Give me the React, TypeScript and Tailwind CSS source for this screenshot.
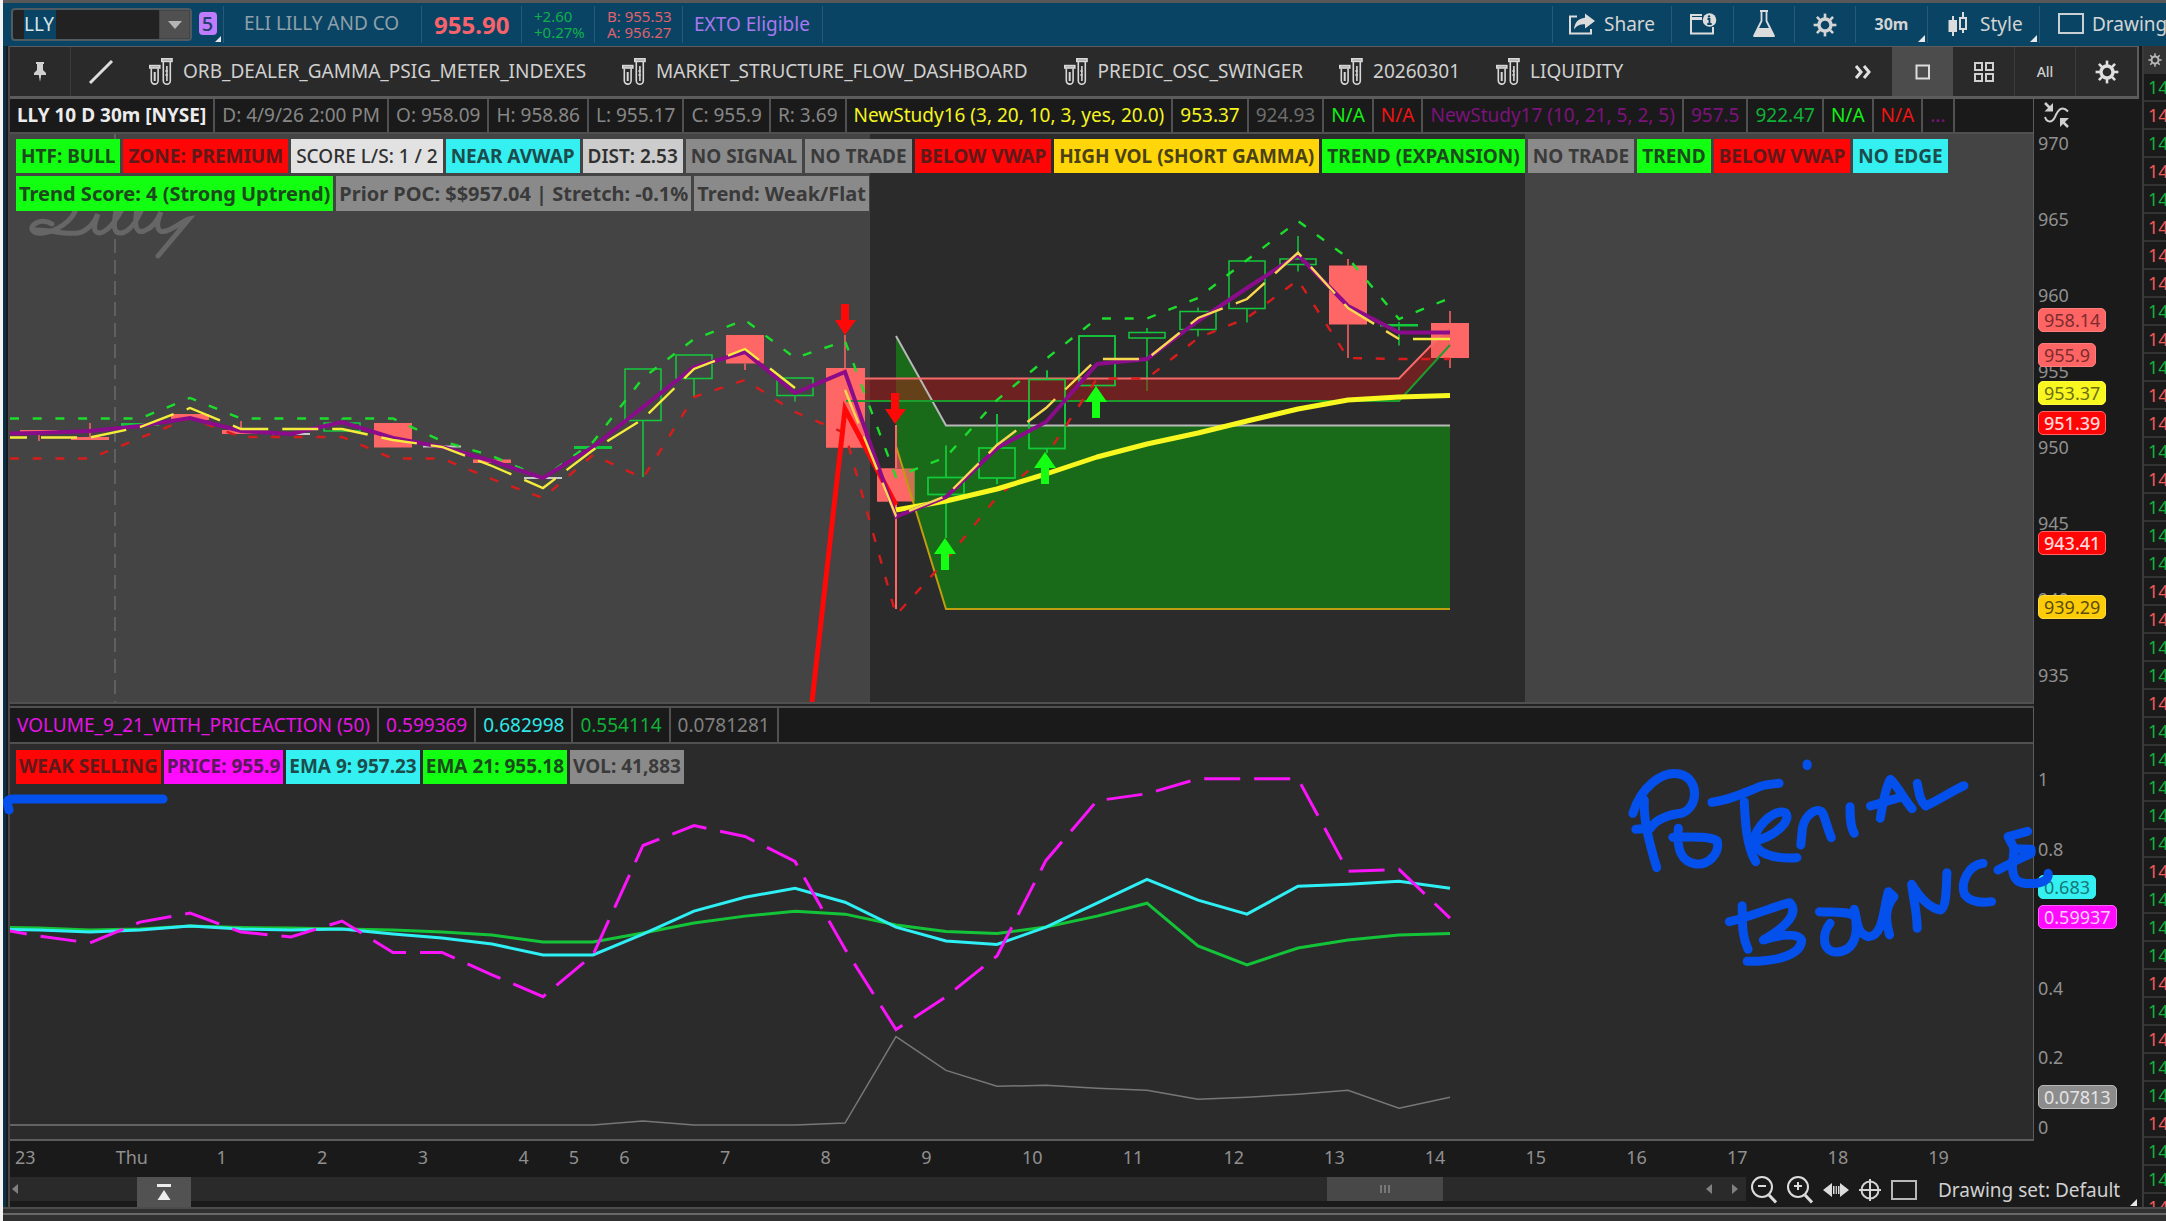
import React from "react";

type Pt = [number, number];

/* ---------- icons ---------- */

function Gear({ className }: { className: string }) {
  return (
    <svg viewBox="0 0 24 24" className={className} fill="none" stroke="currentColor">
      <circle cx="12" cy="12" r="6" strokeWidth="3.4" />
      {[0, 45, 90, 135, 180, 225, 270, 315].map((a) => (
        <path key={a} d="M12 0.6V5" strokeWidth="2.6" transform={`rotate(${a} 12 12)`} />
      ))}
    </svg>
  );
}

function Tubes() {
  return (
    <svg viewBox="0 0 24 28" className="h-7 w-6 shrink-0" fill="none" stroke="#d8d8d8" strokeWidth="1.6">
      <rect x="0.8" y="7.6" width="10" height="2.4" fill="#9a9a9a" />
      <path d="M2.3 10.5v12.2a3.4 3.4 0 0 0 6.8 0V10.5" />
      <path d="M5.7 14v9" strokeWidth="2" />
      <rect x="12.8" y="0.8" width="10.2" height="2.6" fill="#9a9a9a" />
      <path d="M14.3 3.6v19.1a3.5 3.5 0 0 0 7 0V3.6" />
      <path d="M17.9 8v15" strokeWidth="1.6" />
      <path d="M16 13h3M16 17h3" strokeWidth="1" />
    </svg>
  );
}

function ShareIcon() {
  return (
    <svg viewBox="0 0 28 22" className="h-[22px] w-7" fill="none">
      <path d="M9 3.5H2v17h21v-4.5" stroke="#dcdcdc" strokeWidth="2" />
      <path d="M17 0.5 27 8l-10 7.5v-4.3c-5 0-8.500 1.300-11 5.300C6.600 10 10 5.300 17 4.800Z" fill="#dcdcdc" />
    </svg>
  );
}

function CalendarInfo() {
  return (
    <svg viewBox="0 0 28 22" className="h-[22px] w-7" fill="none">
      <path d="M13 2H2v18.500h22V14" stroke="#dcdcdc" strokeWidth="2" />
      <path d="M2 5.500h11" stroke="#dcdcdc" strokeWidth="3" />
      <circle cx="20.500" cy="7" r="6.800" fill="#dcdcdc" />
      <path d="M18.500 6h2v5M18.300 11h4.400" stroke="#0b4566" strokeWidth="1.800" />
      <circle cx="20" cy="3.400" r="1.200" fill="#0b4566" />
    </svg>
  );
}

function Flask() {
  return (
    <svg viewBox="0 0 24 28" className="h-7 w-6" fill="none">
      <path d="M8 1h8M9.500 1v10L2 26h20L14.500 11V1" stroke="#dcdcdc" strokeWidth="1.800" strokeLinejoin="round" />
      <path d="M6 18h12l4 8.500H2Z" fill="#dcdcdc" />
    </svg>
  );
}

function CandlesIcon() {
  return (
    <svg viewBox="0 0 20 24" className="h-6 w-5" fill="none" stroke="#dcdcdc" strokeWidth="2">
      <path d="M5 4v20" />
      <rect x="1.500" y="9" width="6.500" height="10" fill="#dcdcdc" />
      <path d="M15 0v6M15 17v4" />
      <rect x="12" y="6" width="6" height="11" />
    </svg>
  );
}

function Corner() {
  return (
    <svg viewBox="0 0 6 6" className="absolute right-[2px] bottom-[1px] size-[7px]">
      <path d="M6 0V6H0Z" fill="#e8e8e8" />
    </svg>
  );
}

/* ---------- header ---------- */

const sep = "border-r border-[#255a78]";

function Header() {
  return (
    <header className="flex h-[43px] shrink-0 items-stretch overflow-hidden bg-[#0a4465] pl-[8px] text-[19px] whitespace-nowrap text-[#d4d4d4]">
      <div className="my-[5px] flex w-[181px] shrink-0 items-center rounded-sm border-2 border-[#4f5b60] bg-[#222] pl-[11px]">
        <input aria-label="Symbol" defaultValue="LLY" className="w-8 bg-[#0a4465] text-[#d8e4ea] outline-none" />
        <button aria-label="Symbol list" className="ml-auto flex h-full w-[31px] items-center justify-center border border-[#444] bg-[#505050]">
          <svg viewBox="0 0 14 8" className="h-2 w-[14px]"><path d="M0 0h14L7 8Z" fill="#b5b5b5" /></svg>
        </button>
      </div>
      <button aria-label="Link group 5" className={`relative my-[3px] flex w-[32px] shrink-0 items-center justify-center pb-[2px] ${sep}`}>
        <span className="flex h-[23px] w-[18px] items-center justify-center rounded bg-[#c07cff] text-xl leading-none font-medium text-[#1f3f6b]">5</span>
        <svg viewBox="0 0 6 6" className="absolute right-[2px] bottom-[1px] size-[6px]"><path d="M6 0V6H0Z" fill="#e8e8e8" /></svg>
      </button>
      <div className={`my-[3px] flex w-[198px] shrink-0 items-center pb-[2px] pl-[20px] text-[#8fa0aa] ${sep}`}>ELI LILLY AND CO</div>
      <div className={`my-[3px] flex w-[100px] shrink-0 items-center pl-3 text-2xl font-bold text-[#f8626a] ${sep}`}>955.90</div>
      <div className={`my-[3px] flex w-[73px] shrink-0 flex-col justify-center pb-[2px] pl-3 text-[15px] leading-4 text-[#10b048] ${sep}`}>
        <span>+2.60</span>
        <span>+0.27%</span>
      </div>
      <div className={`my-[3px] flex w-[88px] shrink-0 flex-col justify-center pb-[2px] pl-3 text-[15px] leading-4 text-[#e0606c] ${sep}`}>
        <span>B: 955.53</span>
        <span>A: 956.27</span>
      </div>
      <div className={`my-[3px] flex w-[140px] shrink-0 items-center pb-px pl-[11px] text-[#a878f0] ${sep}`}>EXTO Eligible</div>
      <div className={`my-[3px] flex-1 ${sep}`} />
      <button className={`my-[3px] flex w-[119px] shrink-0 items-center gap-2 pb-px pl-[15px] ${sep}`}><ShareIcon />Share</button>
      <button aria-label="Calendar" className={`my-[3px] flex w-[62px] shrink-0 items-center justify-center pb-px ${sep}`}><CalendarInfo /></button>
      <button aria-label="Studies" className={`my-[3px] flex w-[61px] shrink-0 items-center justify-center pb-[2px] ${sep}`}><Flask /></button>
      <button aria-label="Settings" className={`my-[3px] flex w-[61px] shrink-0 items-center justify-center ${sep}`}><Gear className="size-6" /></button>
      <button className={`relative my-[3px] flex w-[72px] shrink-0 items-center justify-center pb-[2px] text-base font-bold ${sep}`}>30m<Corner /></button>
      <button className={`relative my-[3px] flex w-[112px] shrink-0 items-center gap-3 pb-px pl-5 ${sep}`}><CandlesIcon />Style<Corner /></button>
      <button className="my-[3px] flex w-[126px] shrink-0 items-center gap-2 pb-px pl-[18px]">
        <svg viewBox="0 0 26 22" className="h-[22px] w-[26px] shrink-0" fill="none"><rect x="1" y="1" width="24" height="19" stroke="#c8d0d4" strokeWidth="2" /></svg>
        Drawing
      </button>
    </header>
  );
}

/* ---------- toolbar ---------- */

const tools = ["ORB_DEALER_GAMMA_PSIG_METER_INDEXES", "MARKET_STRUCTURE_FLOW_DASHBOARD", "PREDIC_OSC_SWINGER", "20260301", "LIQUIDITY"];

function Toolbar() {
  return (
    <div className="flex h-[53px] shrink-0 items-stretch border-t border-r-2 border-b-3 border-[#5c5c5c] bg-[#2a2a2a] text-[19px] whitespace-nowrap text-[#d0d0d0]">
      <button aria-label="Pin" className="flex w-[61px] shrink-0 items-center justify-center border-r border-[#3c3c3c]">
        <svg viewBox="0 0 12 22" className="h-[22px] w-3" fill="#d0d0d0"><path d="M2 1h8v2H9v6l3 3v2H7.200L6 21 4.800 14H0v-2l3-3V3H2Z" /></svg>
      </button>
      <button aria-label="Trend line" className="flex w-[60px] shrink-0 items-center justify-center">
        <svg viewBox="0 0 26 26" className="size-[26px]"><path d="M2 24 24 2" stroke="#dedede" strokeWidth="3" /></svg>
      </button>
      <div className="flex items-center gap-[36px] pl-[18px]">
        {tools.map((t) => (
          <button key={t} className="flex items-center gap-[10px]"><Tubes />{t}</button>
        ))}
      </div>
      <button aria-label="More" className="mr-[20px] ml-auto">
        <svg viewBox="0 0 18 14" className="h-[14px] w-[18px]" fill="none" stroke="#e0e0e0" strokeWidth="3"><path d="M2 1l5 6-5 6M10 1l5 6-5 6" /></svg>
      </button>
      <button aria-label="Single view" className="flex w-[61px] shrink-0 items-center justify-center bg-[#4c4c4c]">
        <svg viewBox="0 0 16 16" className="size-4" fill="none" stroke="#dcdcdc" strokeWidth="2"><rect x="1.500" y="1.500" width="12.500" height="13" /></svg>
      </button>
      <button aria-label="Grid view" className="flex w-[62px] shrink-0 items-center justify-center border-r border-[#3c3c3c]">
        <svg viewBox="0 0 20 20" className="size-5" fill="none" stroke="#d0d0d0" strokeWidth="2">
          <rect x="1" y="1" width="7" height="7" /><rect x="12" y="1" width="7" height="7" /><rect x="1" y="12" width="7" height="7" /><rect x="12" y="12" width="7" height="7" />
        </svg>
      </button>
      <button className="flex w-[61px] shrink-0 items-center justify-center border-r border-[#3c3c3c] text-sm font-medium">All</button>
      <button aria-label="Chart settings" className="flex w-[61px] shrink-0 items-center justify-center text-[#e0e0e0]"><Gear className="size-6" /></button>
    </div>
  );
}

/* ---------- status cells and chips ---------- */

function Cells({ items, className }: { items: [string, string][]; className: string }) {
  return (
    <div className={`flex shrink-0 items-stretch overflow-hidden border-b-2 border-[#505050] bg-[#1a1a1a] text-[19px] whitespace-nowrap ${className}`}>
      {items.map(([t, c], i) => (
        <span key={i} className={`flex items-center border-r-2 border-[#505050] px-[7px] ${c}`}>{t}</span>
      ))}
    </div>
  );
}

const priceCells: [string, string][] = [
  ["LLY 10 D 30m [NYSE]", "font-bold text-[#ececec]"],
  ["D: 4/9/26 2:00 PM", "text-[#868686]"],
  ["O: 958.09", "text-[#868686]"],
  ["H: 958.86", "text-[#868686]"],
  ["L: 955.17", "text-[#868686]"],
  ["C: 955.9", "text-[#868686]"],
  ["R: 3.69", "text-[#868686]"],
  ["NewStudy16 (3, 20, 10, 3, yes, 20.0)", "text-[#f5f520]"],
  ["953.37", "text-[#f5f520]"],
  ["924.93", "text-[#6c6c6c]"],
  ["N/A", "text-[#14f014]"],
  ["N/A", "text-[#f01414]"],
  ["NewStudy17 (10, 21, 5, 2, 5)", "text-[#7c127c]"],
  ["957.5", "text-[#7c127c]"],
  ["922.47", "text-[#10b038]"],
  ["N/A", "text-[#14f014]"],
  ["N/A", "text-[#f01414]"],
  ["...", "text-[#7c127c]"],
];

const volumeCells: [string, string][] = [
  ["VOLUME_9_21_WITH_PRICEACTION (50)", "text-[#e414e4]"],
  ["0.599369", "text-[#e414e4]"],
  ["0.682998", "text-[#2ee8e8]"],
  ["0.554114", "text-[#10b038]"],
  ["0.0781281", "text-[#808080]"],
];

function Chips({ items, chip }: { items: [string, string][]; chip: string }) {
  return (
    <div className="flex gap-[3px] whitespace-nowrap">
      {items.map(([t, c], i) => (
        <span key={i} className={`flex items-center ${chip} ${c}`}>{t}</span>
      ))}
    </div>
  );
}

const G = "bg-[#12ff12] font-bold text-[#1c4a1c]";
const R = "bg-[#ff0505] font-bold text-[#5e1a1a]";
const C = "bg-[#34f0f0] font-bold text-[#1c4c4c]";
const N = "bg-[#8a8a8a] font-bold text-[#3a3a3a]";

const chipsA: [string, string][] = [
  ["HTF: BULL", G],
  ["ZONE: PREMIUM", R],
  ["SCORE L/S: 1 / 2", "bg-[#e2e2e2] font-medium text-[#303030]"],
  ["NEAR AVWAP", C],
  ["DIST: 2.53", "bg-[#cccccc] font-semibold text-[#303030]"],
  ["NO SIGNAL", N],
  ["NO TRADE", N],
  ["BELOW VWAP", R],
  ["HIGH VOL (SHORT GAMMA)", "bg-[#ffd60a] font-bold text-[#4a4214]"],
  ["TREND (EXPANSION)", G],
  ["NO TRADE", N],
  ["TREND", G],
  ["BELOW VWAP", R],
  ["NO EDGE", C],
];
const chipsB: [string, string][] = [
  ["Trend Score: 4 (Strong Uptrend)", G],
  ["Prior POC: $$957.04 | Stretch: -0.1%", N],
  ["Trend: Weak/Flat", N],
];
const chipsC: [string, string][] = [
  ["WEAK SELLING", R],
  ["PRICE: 955.9", "bg-[#ff0cff] font-bold text-[#5a1a5a]"],
  ["EMA 9: 957.23", C],
  ["EMA 21: 955.18", G],
  ["VOL: 41,883", N],
];

/* ---------- series ---------- */

const xs = [10, 39, 90, 140, 190, 241, 291, 342, 393, 442, 492, 543, 593, 643, 694, 745, 795, 845, 896, 946, 997, 1046, 1097, 1147, 1198, 1247, 1298, 1348, 1399, 1450];
const line = (ys: number[], from = 0) => ys.map((y, i) => `${xs[i + from]},${y}`).join(" ");
const poly = (p: Pt[]) => p.map((a) => a.join(",")).join(" ");

const fast = [433.5, 433, 431, 426, 418, 431, 434, 422, 438, 447, 461, 478, 447, 407, 367, 352, 393, 372, 516.7, 497, 448, 422, 364, 359, 321, 288, 255, 306, 332.5, 332.5];
const slow = [437.5, 437.5, 437.5, 427, 408, 429, 429, 429, 440, 447, 466, 488, 450, 419, 369, 349, 388];
const slow2 = [390, 516, 496, 445, 408, 359, 359, 318, 299, 252.7, 308, 339];
const upper = [418.5, 418.5, 418.5, 418.5, 398, 418.5, 418.5, 418.5, 418.5, 441, 456, 478, 442, 378, 339, 320, 358, 341, 477, 457, 400, 359, 318.5, 318.5, 298, 260, 221, 258, 319, 298];
const lower = [458.5, 458.5, 458.5, 438, 418, 437, 437, 437, 458.5, 458.5, 479, 498, 455, 478, 397, 380, 412, 433, 615, 560, 497, 456, 378.5, 378.5, 338, 318, 280, 358, 359, 359];
const thick = [510, 501, 489, 474, 457, 444, 433, 421, 409, 400, 397, 395.5];

/* x, body top, body bottom, high, low, kind */
const candles: [number, number, number, number, number, string][] = [
  [39, 430, 433, 430, 441, "r"],
  [90, 437, 440, 423, 440, "r"],
  [140, 423, 426, 423, 426, "s"],
  [190, 414, 420, 414, 420, "r"],
  [241, 430, 434, 421, 434, "r"],
  [291, 433, 435, 433, 435, "w"],
  [342, 423, 431, 418, 431, "g"],
  [393, 423, 447.5, 423, 447.5, "r"],
  [442, 445.5, 447.5, 445, 447, "w"],
  [492, 459.5, 463, 459, 463, "r"],
  [543, 477, 479, 477, 479, "w"],
  [593, 446, 449, 446, 449, "s"],
  [643, 369, 420.5, 369, 477, "g"],
  [694, 355, 378.5, 355, 396, "g"],
  [745, 335, 363.5, 335, 370, "r"],
  [795, 378, 395.5, 378, 401.5, "g"],
  [845, 368, 447.5, 335, 447.5, "r"],
  [896, 468.5, 501.5, 425, 609, "r"],
  [946, 477.5, 494.5, 445.5, 538, "g"],
  [997, 448, 478, 414, 484, "g"],
  [1047, 379.5, 448.5, 370.5, 453, "g"],
  [1097, 336, 385.5, 336, 385.5, "g"],
  [1147, 332.5, 338, 328, 391, "g"],
  [1198, 311.5, 329.5, 307.5, 336.5, "g"],
  [1247, 261, 308.5, 259, 322.5, "g"],
  [1298, 259, 264.5, 236, 271.5, "g"],
  [1348, 265.5, 324.5, 259, 358, "r"],
  [1399, 324, 326.5, 322, 345.5, "s"],
  [1450, 323, 358, 311, 368, "r"],
];

function PriceChart() {
  return (
    <svg viewBox="10 134 2023 568" preserveAspectRatio="none" className="absolute inset-0 size-full" fill="none" role="img" aria-label="LLY price chart">
      <rect x="10" y="134" width="2023" height="568" fill="#444444" />
      <rect x="870" y="134" width="655" height="568" fill="#2b2b2b" />
      <path d="M115 134V702" stroke="#6a6a6a" strokeWidth="1.5" strokeDasharray="14 7" />
      <path d="M52 224C40 217 28 226 33 231C38 236 56 232 68 221C78 212 80 200 70 184M34 230C50 229 62 235 78 233C88 231 95 222 98 214C94 224 92 233 100 233C110 231 120 215 126 200C130 186 118 190 116 210C114 224 112 234 122 233C134 230 142 210 146 198C148 188 138 192 137 208C135 222 134 234 144 231C152 228 158 220 161 212C156 224 156 234 166 231C176 228 184 220 189 219L158 256" stroke="#666" strokeWidth="5" strokeLinecap="round" />

      {candles.map(([x, t, b, hi, lo, k]) => {
        const col = k === "r" ? "#ff6666" : k === "w" ? "#c8c8c8" : "#14c83c";
        return (
          <g key={x} stroke={col}>
            <path d={`M${x} ${hi}V${t}M${x} ${b}V${lo}`} strokeWidth="1.5" />
            {k === "g" ? <rect x={x - 18} y={t} width="36" height={b - t} strokeWidth="1.5" /> : <rect x={x - 19} y={t} width="38" height={b - t} fill={col} stroke="none" />}
          </g>
        );
      })}

      <polygon points={poly([[896, 336], [946, 425.5], [1450, 425.5], [1450, 609], [946, 609], [896, 446]])} fill="#0ca00c" fillOpacity="0.54" />
      <polygon points={poly([[845, 378.5], [1399, 378.5], [1450, 326], [1450, 345], [1399, 401], [845, 401]])} fill="#b01818" fillOpacity="0.5" />
      <rect x="826" y="368" width="39" height="79.5" fill="#ff6666" />
      <rect x="877" y="468.5" width="19" height="33" fill="#ff6666" />
      <path d="M896 468.5H914V501.5H911L896 447Z" fill="#ff6666" fillOpacity="0.6" />
      <rect x="1431" y="323" width="38" height="35" fill="#ff6666" fillOpacity="0.8" />
      <polyline points="896,336 946,425.5 1450,425.5" stroke="#b8b8b8" strokeWidth="2" />
      <polyline points="896,446 946,609 1450,609" stroke="#c09c10" strokeWidth="2" />
      <polyline points="864,378.5 1399,378.5 1450,326" stroke="#f86a6a" strokeWidth="2" />
      <polyline points="846,401 1399,401 1450,345" stroke="#1c9c2c" strokeWidth="2" />
      <path d="M896 425V468M896 502V609" stroke="#ff6666" strokeWidth="2" />
      {candles.slice(18, 22).map(([x, t, b, hi, lo]) => (
        <g key={x} stroke="#14c83c" strokeWidth="1.5">
          <path d={`M${x} ${hi}V${t}M${x} ${b}V${lo}`} />
          <rect x={x - 18} y={t} width="36" height={b - t} />
        </g>
      ))}

      <polyline points={line(lower)} stroke="#d81c1c" strokeWidth="2.4" strokeDasharray="9 13.7" />
      <polyline points={line(upper)} stroke="#1cdc2c" strokeWidth="2.4" strokeDasharray="9 13.7" />
      <polyline points={line(thick, 18)} stroke="#f8f820" strokeWidth="5" strokeLinejoin="round" />
      <polyline points="812,702 845,409 896,505" stroke="#ff0808" strokeWidth="5" />
      <polyline points={line(fast)} stroke="#8a0c8a" strokeWidth="4" />
      <polyline points={line(slow)} stroke="#f4ec3c" strokeWidth="2.4" strokeDasharray="36 14" strokeDashoffset="19" />
      <polyline points={line(slow2, 17)} stroke="#f8d850" strokeWidth="2.4" strokeDasharray="36 14" />
      <path d="M1413 339H1450" stroke="#f4ec3c" strokeWidth="2.4" />

      {([[845, 304], [895, 393]] as Pt[]).map(([x, y]) => (
        <path key={x} d={`M${x - 4} ${y}h8v16h7l-11 15l-10 -15h6Z`} fill="#ff0808" />
      ))}
      {([[945, 538], [1045, 452], [1096, 386]] as Pt[]).map(([x, y]) => (
        <path key={x} d={`M${x} ${y}l11 16h-7v16h-8v-16h-7Z`} fill="#14ff14" />
      ))}
    </svg>
  );
}

const ema21 = [928.5, 929, 931, 930, 927, 928.5, 929, 930, 931, 933, 936, 943, 943, 934, 924, 917, 912, 915, 926, 932.5, 934.5, 928, 917, 904, 947, 966, 949, 941, 936, 934.5];
const ema9 = [930.5, 931, 933, 931, 927, 930, 931, 930, 935, 939, 945, 956, 956, 935, 912, 898, 889, 903, 928, 942, 945.5, 928, 904, 880, 901, 915, 887, 885, 882, 889];
const price = [932, 937, 944, 923, 914, 933, 938, 922, 953.5, 953.5, 976, 998, 956, 846, 826, 837, 862, 950, 1031, 998, 957, 861, 801, 794, 779, 779, 779, 872, 870, 919];
const volume = [1127, 1127, 1127, 1127, 1127, 1127, 1127, 1127, 1127, 1127, 1127, 1127, 1127, 1123, 1127, 1127, 1127, 1125, 1038, 1072, 1088, 1087, 1090, 1092, 1101, 1099, 1096, 1092, 1110, 1099];

function VolumeChart() {
  return (
    <svg viewBox="10 744 2023 397" preserveAspectRatio="none" className="absolute inset-0 size-full" fill="none" role="img" aria-label="Volume with price action">
      <rect x="10" y="744" width="2023" height="397" fill="#2b2b2b" />
      <polyline points={line(volume)} stroke="#777" strokeWidth="1.5" />
      <polyline points={line(ema21)} stroke="#14c438" strokeWidth="3" />
      <polyline points={line(ema9)} stroke="#2ef0f4" strokeWidth="3" />
      <polyline points={line(price)} stroke="#fa14fa" strokeWidth="3" strokeDasharray="36 14" strokeDashoffset="19" />
    </svg>
  );
}

/* freehand strokes, drawn in their own sketch coordinates */
const ink = [
  "M311 280C330 200 380 152 420 162C470 175 465 265 425 280C390 285 365 300 352 325L318 328",
  "M338 240C335 300 350 370 367 443",
  "M405 352C450 350 505 350 510 365C515 400 490 435 460 432C425 425 413 390 418 325",
  "M497 247C540 240 570 220 600 205C620 192 640 192 655 190",
  "M573 245C575 300 578 380 600 425",
  "M602 362C650 345 685 300 670 278C640 265 595 330 597 362C600 400 640 418 697 413",
  "M706 375L710 325C715 285 745 258 757 278C765 300 770 330 778 353",
  "M822 260C822 290 822 320 832 340",
  "M721 132v5",
  "M893 295C900 250 905 200 917 178C935 200 950 240 968 266M870 258L940 232",
  "M980 190C985 220 985 240 1000 258C1030 240 1060 215 1090 197",
  "M538 605C590 590 640 560 680 548C700 575 680 615 618 660C670 640 700 640 708 660C708 700 660 725 580 724",
  "M568 557C570 600 565 640 582 688",
  "M750 575C790 578 828 572 835 595C840 640 835 690 793 696C755 700 755 640 775 610",
  "M832 568C840 600 835 640 865 650C900 650 900 570 912 515L925 530C900 570 908 610 915 645",
  "M980 625C980 580 970 530 967 493C985 530 1010 565 1035 570C1050 560 1048 500 1050 458",
  "M1135 430C1100 435 1080 490 1092 525C1105 545 1130 550 1155 545",
  "M1240 334L1194 350L1208 385L1204 440C1205 480 1215 495 1260 490C1280 488 1290 475 1288 460",
  "M1208 386L1248 388L1248 400L1215 420L1170 450",
];

function Ink() {
  return (
    <svg viewBox="10 708 2128 433" preserveAspectRatio="none" className="pointer-events-none absolute inset-0 size-full overflow-visible" fill="none" stroke="#0450ec" strokeWidth="9" strokeLinecap="round" strokeLinejoin="round">
      <path d="M9 810 7 802Q8 799 14 799H163" />
      <g transform="translate(1500 720) scale(0.4248 0.3333)">
        {ink.map((d) => <path key={d} d={d} vectorEffect="non-scaling-stroke" />)}
      </g>
    </svg>
  );
}

/* ---------- value axes ---------- */

function Tick({ top, children }: { top: number; children: React.ReactNode }) {
  return <span className="absolute left-[4px] -translate-y-1/2 leading-6 text-[#909090]" style={{ top: `${top}%` }}>{children}</span>;
}
function Tag({ top, className, children }: { top: number; className: string; children: React.ReactNode }) {
  return <span className={`absolute left-[4px] flex h-6 -translate-y-1/2 items-center rounded-[5px] border px-[5px] ${className}`} style={{ top: `${top}%` }}>{children}</span>;
}

const priceTop = (v: number) => ((44 + (970 - v) * 15.2) / 603) * 100;
const volTop = (v: number) => ((71 + (1 - v) * 348) / 433) * 100;

function PriceAxis() {
  return (
    <div className="relative w-[105px] shrink-0 overflow-hidden text-lg">
      <button aria-label="Fit scale" className="absolute top-[3px] left-[9px]">
        <svg viewBox="0 0 28 26" className="h-[26px] w-7" fill="none" stroke="#d0d0d0" strokeWidth="2">
          <path d="M2 1 7 6" strokeWidth="2.5" /><path d="M10 1v8.500H1.500Z" fill="#d0d0d0" stroke="none" />
          <path d="M2 15C4 21 9 21 12 15C15 8 19 3 25 9.500" />
          <path d="M25 25 20 20" strokeWidth="2.5" /><path d="M17 25v-9h9Z" fill="#d0d0d0" stroke="none" />
        </svg>
      </button>
      {[970, 965, 960, 955, 950, 945, 940, 935].map((v) => <Tick key={v} top={priceTop(v)}>{v}</Tick>)}
      <Tag top={36.6} className="border-[#ff7c7c] bg-[#ff6464] text-[#7c2c2c]">958.14</Tag>
      <Tag top={42.4} className="border-[#ff7c7c] bg-[#ff6464] text-[#7c2c2c]">955.9</Tag>
      <Tag top={48.8} className="border-[#ffff3c] bg-[#f8f820] text-[#6e6e14]">953.37</Tag>
      <Tag top={53.7} className="border-[#ff6464] bg-[#ff0505] font-medium text-[#ffd8d8]">951.39</Tag>
      <Tag top={73.7} className="border-[#ff6464] bg-[#ff0505] font-medium text-[#ffd8d8]">943.41</Tag>
      <Tag top={84.2} className="border-[#ffd83c] bg-[#fccc08] text-[#5c4c0c]">939.29</Tag>
    </div>
  );
}

function VolumeAxis() {
  return (
    <div className="relative w-[105px] shrink-0 text-lg">
      {[1, 0.8, 0.4, 0.2, 0].map((v) => <Tick key={v} top={volTop(v)}>{v}</Tick>)}
      <Tag top={41.3} className="border-[#34f0f0] bg-[#34f0f0] text-[#147878]">0.683</Tag>
      <Tag top={48.2} className="border-[#ff5cff] bg-[#ff0cff] text-[#ffd0ff]">0.59937</Tag>
      <Tag top={89.8} className="border-[#b8b8b8] bg-[#8c8c8c] text-[#e4e4e4]">0.07813</Tag>
    </div>
  );
}

/* ---------- time axis and footer ---------- */

const times: [string, string][] = [
  ["23", "col-span-2"], ["Thu", "col-span-2"], ["1", "col-span-2"], ["2", "col-span-2"], ["3", "col-span-2"], ["4", "col-span-1"], ["5", "col-span-1"],
  ["6", "col-span-2"], ["7", "col-span-2"], ["8", "col-span-2"], ["9", "col-span-2"], ["10", "col-span-2"], ["11", "col-span-2"], ["12", "col-span-2"],
  ["13", "col-span-2"], ["14", "col-span-2"], ["15", "col-span-2"], ["16", "col-span-2"], ["17", "col-span-2"], ["18", "col-span-2"], ["19", "col-span-2"],
];

function Footer() {
  return (
    <div className="flex h-[30px] shrink-0 items-start text-[19px] text-[#d0d0d0]">
      <div className="flex h-6 flex-1 items-start bg-[#2a2a2a]">
        <button aria-label="Scroll to start" className="flex h-6 w-[127px] items-center pl-[2px]">
          <svg viewBox="0 0 6 10" className="h-[10px] w-[6px]"><path d="M6 0V10L0 5Z" fill="#808080" /></svg>
        </button>
        <button aria-label="Expand panel" className="flex h-[30px] w-[54px] items-center justify-center bg-[#525252]">
          <svg viewBox="0 0 14 16" className="h-4 w-[14px]" fill="#ececec"><path d="M0 0h14v3H0ZM7 6l6.500 10H.5Z" /></svg>
        </button>
        <div className="flex-[1135]" />
        <div className="flex h-6 w-[116px] items-center justify-center gap-[2px] bg-[#484848]">
          <i className="h-2 w-[2px] bg-[#777]" /><i className="h-2 w-[2px] bg-[#777]" /><i className="h-2 w-[2px] bg-[#777]" />
        </div>
        <div className="flex-[263]" />
        <button aria-label="Scroll left" className="h-6 w-[14px]"><svg viewBox="0 0 6 10" className="h-[10px] w-[6px]"><path d="M6 0V10L0 5Z" fill="#808080" /></svg></button>
        <button aria-label="Scroll right" className="ml-[12px] h-6 w-[14px]"><svg viewBox="0 0 6 10" className="h-[10px] w-[6px]"><path d="M0 0V10L6 5Z" fill="#808080" /></svg></button>
      </div>
      <div className="relative flex h-[30px] w-[393px] shrink-0 items-center gap-[10px] pb-[4px] pl-[5px] whitespace-nowrap">
        <button aria-label="Zoom out">
          <svg viewBox="0 0 26 28" className="h-7 w-[26px]" fill="none" stroke="#dcdcdc" strokeWidth="2"><circle cx="11" cy="11" r="10" /><path d="M7 10h8" /><path d="M18 19l7 7.500" strokeWidth="3" /></svg>
        </button>
        <button aria-label="Zoom in">
          <svg viewBox="0 0 26 28" className="h-7 w-[26px]" fill="none" stroke="#dcdcdc" strokeWidth="2"><circle cx="11" cy="11" r="10" /><path d="M7 10h8M11 6v8" /><path d="M18 19l7 7.500" strokeWidth="3" /></svg>
        </button>
        <button aria-label="Fit width">
          <svg viewBox="0 0 26 16" className="h-4 w-[26px]" fill="#dcdcdc"><path d="M9 1V15L0 8ZM17 1V15l9-7Z" /><path d="M10 4h1.500v8H10ZM12.700 4h1.200v8h-1.200ZM15 4h1.500v8H15Z" /></svg>
        </button>
        <button aria-label="Crosshair">
          <svg viewBox="0 0 22 22" className="size-[22px]" fill="none" stroke="#d4d4d4" strokeWidth="2"><circle cx="11" cy="11" r="8.500" /><path d="M11 0v22M0 11h22" /></svg>
        </button>
        <button aria-label="Rectangle">
          <svg viewBox="0 0 26 20" className="h-5 w-[26px]" fill="none" stroke="#b8b8b8" strokeWidth="2"><rect x="1" y="1" width="24" height="18" /></svg>
        </button>
        <button className="ml-[11px]">Drawing set: Default</button>
        <Corner />
      </div>
    </div>
  );
}

/* ---------- tape on the right ---------- */

const tape = "grgrgrrrgrgrrgrgggrrggrgggggrgggrgrggrggr".split("");

function Tape() {
  return (
    <aside className="flex w-[22px] shrink-0 flex-col overflow-hidden text-lg">
      <div className="flex h-7 shrink-0 items-center bg-[#333] pl-1 text-[#b8b8b8]"><Gear className="size-[14px] shrink-0" /></div>
      <ul className="h-0 grow overflow-hidden">
        {tape.map((c, i) => (
          <li key={i} className={`flex h-7 items-center border-b-2 border-[#333] pl-1 ${c === "g" ? "text-[#12b03c]" : "text-[#f05a5a]"}`}>14</li>
        ))}
      </ul>
    </aside>
  );
}

export default function App() {
  return (
    <div className="flex h-screen min-h-[600px] flex-col overflow-hidden border-l-3 border-[#f4f4f4] bg-[#1a1a1a] font-['Noto_Sans',sans-serif]">
      <div className="h-[3px] shrink-0 bg-[#585858]" />
      <Header />
      <main className="flex h-0 grow">
        <div className="w-[7px] shrink-0 border-r-2 border-l-3 border-r-[#484848] border-l-[#0a3048]" />
        <div className="flex w-0 grow flex-col">
          <Toolbar />
          <section className="flex h-0 grow-[603]">
            <div className="flex w-0 grow flex-col border-r border-[#5c5c5c]">
              <Cells items={priceCells} className="h-[35px]" />
              <div className="relative h-0 grow">
                <PriceChart />
                <div className="relative flex flex-col gap-[3px] pt-[5px] pl-[6px]">
                  <Chips items={chipsA} chip="h-[34px] px-[5px] text-[19px]" />
                  <Chips items={chipsB} chip="h-[35px] px-[3px] text-xl" />
                </div>
              </div>
            </div>
            <PriceAxis />
          </section>
          <div className="mr-[105px] h-[6px] shrink-0 border-y-2 border-[#505050] bg-[#222]" />
          <section className="relative flex h-0 grow-[433]">
            <div className="flex w-0 grow flex-col border-r border-b-2 border-[#5c5c5c]">
              <Cells items={volumeCells} className="h-[36px]" />
              <div className="relative h-0 grow">
                <VolumeChart />
                <div className="relative pt-[6px] pl-[6px]"><Chips items={chipsC} chip="h-[34px] px-[3px] pb-[2px] text-[19px]" /></div>
              </div>
            </div>
            <VolumeAxis />
            <Ink />
          </section>
          <div className="mr-[105px] grid h-[36px] shrink-0 grid-cols-40 items-center px-[5px] pb-1 text-lg text-[#909090]">
            {times.map(([t, span]) => <span key={t} className={span}>{t}</span>)}
          </div>
          <Footer />
        </div>
        <div className="w-[5px] shrink-0 border-r-2 border-[#3a3a3a]" />
        <Tape />
      </main>
      <footer className="h-[14px] shrink-0 border-t-2 border-[#4c4c4c] bg-[#303030] pt-[4px]"><div className="h-[2px] bg-[#686868]" /></footer>
    </div>
  );
}
